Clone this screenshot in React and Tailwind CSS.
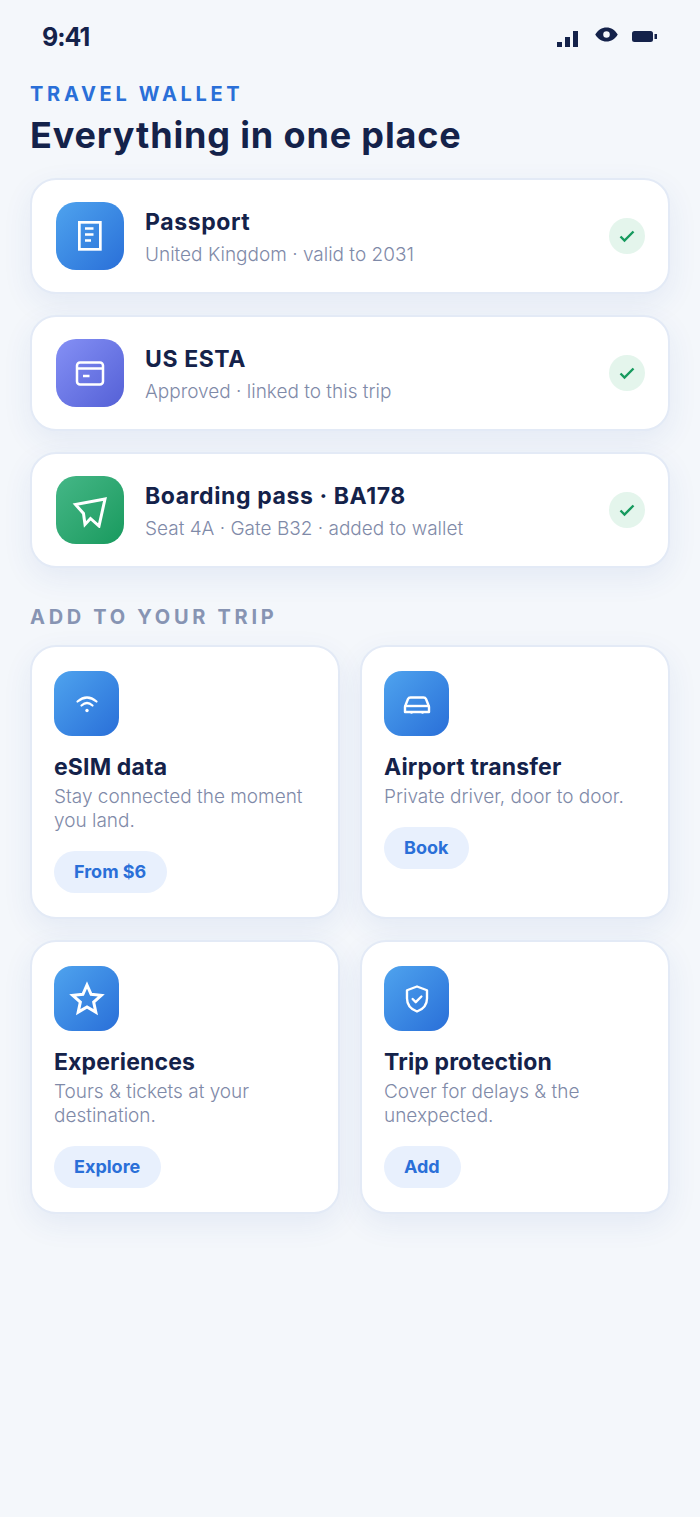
const docs = [
  { title: 'Passport', sub: 'United Kingdom · valid to 2031', tone: 'from-[#4fa3ee] to-[#2a6fd8]', icon: 'doc' },
  { title: 'US ESTA', sub: 'Approved · linked to this trip', tone: 'from-[#8590f5] to-[#5560d6]', icon: 'card' },
  { title: 'Boarding pass · BA178', sub: 'Seat 4A · Gate B32 · added to wallet', tone: 'from-[#44b787] to-[#169a5e]', icon: 'plane' },
];

const extras = [
  { title: 'eSIM data', sub: 'Stay connected the moment you land.', cta: 'From $6', icon: 'wifi' },
  { title: 'Airport transfer', sub: 'Private driver, door to door.', cta: 'Book', icon: 'car' },
  { title: 'Experiences', sub: 'Tours & tickets at your destination.', cta: 'Explore', icon: 'star' },
  { title: 'Trip protection', sub: 'Cover for delays & the unexpected.', cta: 'Add', icon: 'shield' },
];

function Glyph({ name }) {
  const line = { fill: 'none', stroke: '#fff' };
  if (name === 'doc') return (
    <svg className="w-[24px] h-[30px]" viewBox="0 0 24 30" {...line} strokeWidth="2.700">
      <rect x="1.350" y="1.350" width="21" height="27" />
      <path d="M7 7.500h8.500M7 13.500h8.500M7 19.500h6" strokeWidth="2.300" />
    </svg>
  );
  if (name === 'card') return (
    <svg className="w-[30px] h-[25px]" viewBox="0 0 30 25" {...line} strokeWidth="2.500">
      <rect x="2" y="1.500" width="26" height="22" rx="3" />
      <path d="M2 7.500h26M8 15h6.500" />
    </svg>
  );
  if (name === 'plane') return (
    <svg className="w-[36px] h-[36px]" viewBox="0 0 36 36" {...line} strokeWidth="3">
      <path d="M33 7 3.500 12.500l8 9 1.500 11 5.500-6 8.500 7.500z" />
    </svg>
  );
  if (name === 'wifi') return (
    <svg className="w-[24px] h-[24px]" viewBox="0 0 24 24" {...line} strokeWidth="2.200" strokeLinecap="round">
      <path d="M2.500 9.500Q12 1.500 21.500 9.500M6.500 13.500Q12 8.500 17.500 13.500" />
      <circle cx="12" cy="18.500" r="1.700" fill="#fff" stroke="none" />
    </svg>
  );
  if (name === 'car') return (
    <svg className="w-[30px] h-[24px]" viewBox="0 0 30 24" {...line} strokeWidth="2.400" strokeLinejoin="round">
      <path d="M3 20v-5q0-1.500.8-2.500L6 7q.7-1.500 2.500-1.500h13Q23.300 5.500 24 7l2.200 5.500q.8 1 .8 2.500v5z" />
      <path d="M3 14h24" />
      <circle cx="9.500" cy="20.500" r="1.300" fill="#fff" stroke="none" />
      <circle cx="20.500" cy="20.500" r="1.300" fill="#fff" stroke="none" />
    </svg>
  );
  if (name === 'star') return (
    <svg className="w-[36px] h-[36px]" viewBox="0 0 36 36" {...line} strokeWidth="3">
      <path d="M18 4l4.110 9.340 10.160 1.020-7.610 6.800 2.160 9.980L18 26l-8.820 5.140 2.160-9.980-7.610-6.800 10.160-1.020z" />
    </svg>
  );
  return (
    <svg className="w-[30px] h-[30px]" viewBox="0 0 24 24" {...line} strokeWidth="1.900" strokeLinejoin="round" strokeLinecap="round">
      <path d="M12 2l8 3v6.500c0 5-3.400 8.700-8 10.500-4.600-1.800-8-5.500-8-10.500V5z" />
      <path d="M8.500 12l2.500 2.500 4.500-4.500" />
    </svg>
  );
}

function StatusBar() {
  return (
    <div className="flex items-start justify-between pl-[42px] pr-[43px] pt-[21px] h-[66px]">
      <span className="text-[25px] leading-8 font-bold tracking-[-1px] text-[#14224a]">9:41</span>
      <div className="flex items-start">
        <svg className="w-[21px] h-[16px] mt-[10px] mr-[17px]" viewBox="0 0 21 16" fill="#14224a">
          <rect x="0" y="11" width="5" height="5" />
          <rect x="8" y="6" width="5" height="10" />
          <rect x="16" y="0" width="5" height="16" />
        </svg>
        <svg className="w-[23px] h-[15px] mt-[6px] mr-[14px]" viewBox="0 0 24 16" fill="#14224a">
          <path fillRule="evenodd" d="M0 8C3 3 7 .5 12 .5S21 3 24 8c-3 5-7 7.500-12 7.500S3 13 0 8zm12 3.500a3.500 3.500 0 100-7 3.500 3.500 0 000 7z" />
        </svg>
        <svg className="w-[25px] h-[11px] mt-[10px]" viewBox="0 0 25 11" fill="#14224a">
          <rect x="0" y="0" width="21" height="11" rx="2.500" />
          <rect x="22.500" y="3" width="2.500" height="5" />
        </svg>
      </div>
    </div>
  );
}

function DocRow({ title, sub, tone, icon }) {
  return (
    <div className="flex items-center h-[116px] pl-[24px] pr-[23px] bg-white rounded-[26px] border-2 border-[#e3eaf6] shadow-[0_10px_30px_rgba(40,80,160,0.08)]">
      <div className={`w-[68px] h-[68px] shrink-0 rounded-[20px] bg-gradient-to-br ${tone} flex items-center justify-center`}>
        <Glyph name={icon} />
      </div>
      <div className="ml-[21px] flex-1 pt-[3px]">
        <div className="text-[23px] leading-[30px] font-bold tracking-[0.6px] text-[#14224a]">{title}</div>
        <div className="mt-[5px] text-[19px] leading-[26px] font-light text-[#7f8aa8]">{sub}</div>
      </div>
      <div className="w-[36px] h-[36px] rounded-full bg-[#e4f5ec] flex items-center justify-center">
        <svg className="w-[20px] h-[20px]" viewBox="0 0 20 20" fill="none" stroke="#169a5e" strokeWidth="2.400">
          <path d="M3.500 10.500l4 4L16.500 5.500" />
        </svg>
      </div>
    </div>
  );
}

function ExtraCard({ title, sub, cta, icon }) {
  return (
    <div className="h-[274px] px-[22px] pt-[24px] bg-white rounded-[26px] border-2 border-[#e3eaf6] shadow-[0_10px_30px_rgba(40,80,160,0.08)]">
      <div className="w-[65px] h-[65px] rounded-[18px] bg-gradient-to-br from-[#4fa3ee] to-[#2a6fd8] flex items-center justify-center">
        <Glyph name={icon} />
      </div>
      <div className="mt-[16px] text-[23px] leading-[30px] font-bold tracking-[0.15px] text-[#14224a]">{title}</div>
      <div className="mt-[3px] text-[19px] leading-[24px] font-light text-[#7f8aa8]">{sub}</div>
      <span className="inline-flex items-center h-[42px] mt-[18px] pl-[20px] pr-[21px] pb-[2px] rounded-full bg-[#e8f0fd] text-[18px] font-bold text-[#2a6fd8]">{cta}</span>
    </div>
  );
}

export default function App() {
  return (
    <div className="min-h-[1517px] bg-[#f4f7fb] font-['Inter',sans-serif]">
      <StatusBar />
      <div className="px-[30px]">
        <div className="text-[20px] leading-[26px] font-bold tracking-[3.700px] text-[#2a6fd8] mt-[15px]">TRAVEL WALLET</div>
        <h1 className="text-[36px] leading-[46px] font-bold tracking-[0.85px] text-[#14224a] mt-[5px]">Everything in one place</h1>
        <div className="flex flex-col gap-[21px] mt-[20px]">
          {docs.map(d => <DocRow key={d.title} {...d} />)}
        </div>
        <div className="text-[20px] leading-[26px] font-bold tracking-[3.700px] text-[#8794b3] mt-[36px]">ADD TO YOUR TRIP</div>
        <div className="grid grid-cols-2 gap-x-[20px] gap-y-[21px] mt-[15px]">
          {extras.map(e => <ExtraCard key={e.title} {...e} />)}
        </div>
      </div>
    </div>
  );
}
